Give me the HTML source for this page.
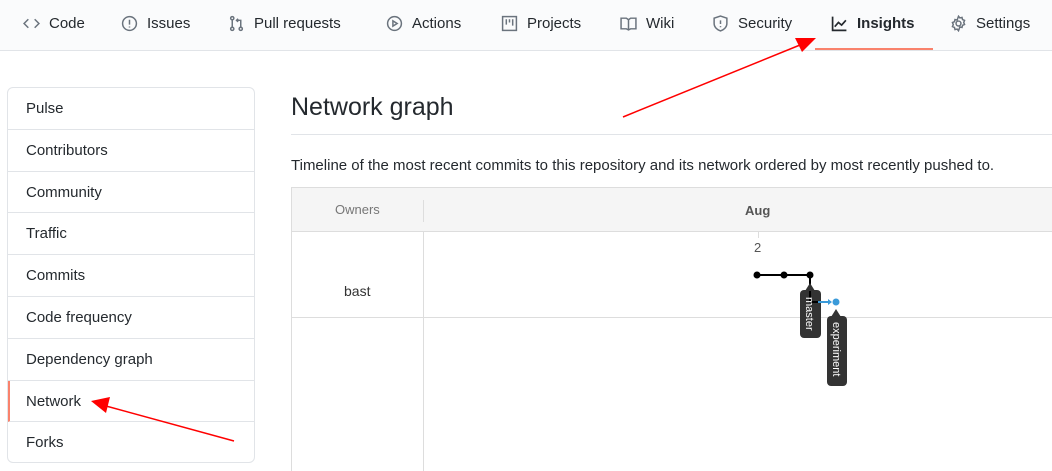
<!DOCTYPE html>
<html><head><style>
*{box-sizing:border-box;margin:0;padding:0}
html,body{width:1052px;height:471px;overflow:hidden}
body{background:#fff;font-family:"Liberation Sans",sans-serif;color:#24292e;position:relative}
.nav{position:absolute;left:0;top:0;width:1052px;height:51px;background:#fafbfc;border-bottom:1px solid #e1e4e8}
.tab{position:absolute;top:15px;font-size:15px;color:#24292e;display:flex;align-items:center;gap:9px;white-space:nowrap}
.tab svg{width:17px;height:17px;fill:none;stroke:#6a737d;stroke-width:1.4}
.side{position:absolute;left:7px;top:87px;width:248px;height:376px;border:1px solid #e1e4e8;border-radius:6px;overflow:hidden}
.side div{height:41.8px;line-height:41.8px;padding-left:18px;font-size:15px;border-bottom:1px solid #e1e4e8}
.side div:last-child{border-bottom:none}
.side .sel{border-left:2px solid #f9826c;padding-left:16px}
h1{position:absolute;left:291px;top:93px;font-size:25px;font-weight:400}
.hr{position:absolute;left:291px;top:134px;width:761px;height:1px;background:#e1e4e8}
.desc{position:absolute;left:291px;top:157px;font-size:15px}
.graph{position:absolute;left:291px;top:187px;width:770px;height:300px;border:1px solid #ddd}
</style></head><body>
<div class="nav">
<div class="tab" style="left:23px"><svg viewBox="0 0 16 16"><path d="M5 4L1 8l4 4M11 4l4 4-4 4"/></svg>Code</div>
<div class="tab" style="left:121px"><svg viewBox="0 0 16 16"><circle cx="8" cy="8" r="6.5"/><path d="M8 4.5v4.5M8 10.8v1"/></svg>Issues</div>
<div class="tab" style="left:228px"><svg viewBox="0 0 16 16"><circle cx="4" cy="3" r="1.5"/><circle cx="4" cy="13" r="1.5"/><circle cx="12" cy="13" r="1.5"/><path d="M4 4.5v7M12 11.5V5H8M9.5 3.5L8 5l1.5 1.5"/></svg>Pull requests</div>
<div class="tab" style="left:386px"><svg viewBox="0 0 16 16"><circle cx="8" cy="8" r="6.5"/><path d="M6.5 5.5v5l4-2.5z"/></svg>Actions</div>
<div class="tab" style="left:501px"><svg viewBox="0 0 16 16"><rect x="1.5" y="1.5" width="13" height="13"/><path d="M5 4v5M8 4v3M11 4v6"/></svg>Projects</div>
<div class="tab" style="left:620px"><svg viewBox="0 0 16 16"><path d="M1 3h5l2 1.5L10 3h5v10h-5l-2 1-2-1H1zM8 4.5V14"/></svg>Wiki</div>
<div class="tab" style="left:712px"><svg viewBox="0 0 16 16"><path d="M8 1l6 2v5c0 3.5-3 6-6 7-3-1-6-3.5-6-7V3z M8 5v3.5M8 10.5v1"/></svg>Security</div>
<div class="tab" style="left:831px;font-weight:700"><svg viewBox="0 0 16 16" style="stroke:#24292e;stroke-width:1.6"><path d="M1.5 1.5v13h13M3.5 11l3.5-4 3 2.5 4-4.5"/></svg>Insights</div>
<div class="tab" style="left:950px"><svg viewBox="0 0 16 16"><circle cx="8" cy="8" r="2.3"/><path d="M8 1.2l1.3 1.6 2-.5.5 2 1.9.8-.8 1.9.8 1.9-1.9.8-.5 2-2-.5L8 14.8l-1.3-1.6-2 .5-.5-2-1.9-.8.8-1.9-.8-1.9 1.9-.8.5-2 2 .5z"/></svg>Settings</div>
<div style="position:absolute;left:815px;top:48px;width:118px;height:2px;background:#f9826c"></div>
</div>
<div class="side">
<div>Pulse</div><div>Contributors</div><div>Community</div><div>Traffic</div><div>Commits</div><div>Code frequency</div><div>Dependency graph</div><div class="sel">Network</div><div>Forks</div>
</div>
<h1>Network graph</h1><div class="hr"></div>
<div class="desc">Timeline of the most recent commits to this repository and its network ordered by most recently pushed to.</div>
<div class="graph">
<div style="position:absolute;left:0;top:0;width:100%;height:44px;background:#f5f5f5;border-bottom:1px solid #ddd"></div>
<div style="position:absolute;left:131px;top:12px;width:1px;height:22px;background:#ddd"></div>
<div style="position:absolute;left:131px;top:44px;width:1px;height:260px;background:#ddd"></div>
<div style="position:absolute;left:0;top:129px;width:100%;height:1px;background:#ddd"></div>
<div style="position:absolute;left:43px;top:14px;font-size:13px;color:#777">Owners</div>
<div style="position:absolute;left:453px;top:15px;font-size:13px;font-weight:700;color:#555">Aug</div>
<div style="position:absolute;left:52px;top:95px;font-size:14px;color:#333">bast</div>
<div style="position:absolute;left:466px;top:44px;width:1px;height:6px;background:#ddd"></div>
<div style="position:absolute;left:462px;top:52px;font-size:13px;color:#555">2</div>
</div>
<svg style="position:absolute;left:0;top:0" width="1052" height="471">
<path d="M757 275H810V292" stroke="#000" stroke-width="2" fill="none"/>
<circle cx="757" cy="275" r="3.5"/><circle cx="784" cy="275" r="3.5"/><circle cx="810" cy="275" r="3.5"/>
<rect x="800" y="290" width="21" height="48" rx="4" fill="#333"/><path d="M805 291l5-8 5 8z" fill="#333"/>
<rect x="827" y="316" width="20" height="70" rx="4" fill="#333"/><path d="M831 317l5-8 5 8z" fill="#333"/>
<path d="M810 291V302H830" stroke="#000" stroke-width="2" fill="none"/>
<path d="M818 302H830" stroke="#3a9ad9" stroke-width="2"/><path d="M828 299l4 3-4 3z" fill="#3a9ad9"/>
<circle cx="836" cy="302" r="3.5" fill="#3a9ad9"/>
<text transform="translate(806,297) rotate(90)" fill="#fff" font-size="11" font-family="Liberation Sans">master</text>
<text transform="translate(833,322) rotate(90)" fill="#fff" font-size="11" font-family="Liberation Sans">experiment</text>
<path d="M623 117L800 45" stroke="#f00" stroke-width="1.5"/><path d="M816 38L795 38L802 52z" fill="#f00"/>
<path d="M234 441L106 406" stroke="#f00" stroke-width="1.5"/><path d="M91 401L110 397L106 413z" fill="#f00"/>
</svg>
</body></html>
